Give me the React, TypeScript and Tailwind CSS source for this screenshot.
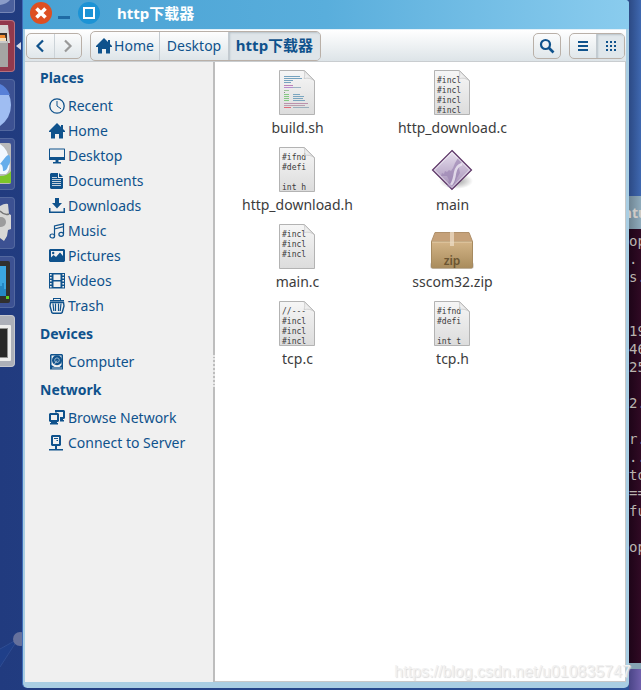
import React from 'react';

/* ---------- Icons (16px symbolic set) ---------- */

const Icon = ({ children }: { children: React.ReactNode }) => (
  <svg width="16" height="16" viewBox="0 0 16 16" fill="currentColor" className="shrink-0" aria-hidden="true">
    {children}
  </svg>
);

const HomeIcon = () => (
  <Icon>
    <path d="M8 0 0 8v1h2v6.5h4V11h4v4.5h4V9h2V8l-2-2V2h-2v2z" />
  </Icon>
);

const ClockIcon = () => (
  <Icon>
    <circle cx="8" cy="8" r="7.2" fill="none" stroke="currentColor" strokeWidth="1.3" />
    <path d="M8 3v5l4 2.8" fill="none" stroke="currentColor" strokeWidth="1" />
  </Icon>
);

const DesktopIcon = () => (
  <Icon>
    <path fillRule="evenodd" d="M0 1 .5.5h15l.5.5v11H0zM1 1.500V9h14V1.500z" />
    <path d="M6.500 12h3v2H12v1.500H4V14h2.500z" />
  </Icon>
);

const DocumentIcon = () => (
  <Icon>
    <path d="M2 0h7v5h5v10l-1 1H2l-1-1V1zM10 0l4 4h-4z" />
    <path d="M3 4.5h5M3 6.5h9M3 8.5h9M3 10.5h9M3 12.5h9" stroke="#f0f0f0" strokeWidth=".8" />
  </Icon>
);

const DownloadIcon = () => (
  <Icon>
    <path d="M6 0h4v5h3l-5 5.500L3 5h3z" />
    <path d="M0 10h1.500v3.500h13V10H16v5H0z" />
  </Icon>
);

const MusicIcon = () => (
  <Icon>
    <path
      d="M5.500 13V3L14.500 .8V11M5.500 6l9-2.300"
      fill="none"
      stroke="currentColor"
      strokeWidth="1.200"
    />
    <ellipse cx="3.300" cy="13" rx="2.300" ry="2" fill="none" stroke="currentColor" strokeWidth="1.200" />
    <ellipse cx="12.200" cy="11.300" rx="2.300" ry="2" fill="none" stroke="currentColor" strokeWidth="1.200" />
  </Icon>
);

const PictureIcon = () => (
  <Icon>
    <path fillRule="evenodd" d="M1 1h14l1 1v11l-1 1H1l-1-1V2zM2 3v9l3-4 2 2 4-5 3 5V3z" />
    <path d="M2 12V9.500L4.500 7 7 9l4-4.500L14 8v4z" />
    <circle cx="4.200" cy="5" r="1.200" />
  </Icon>
);

const VideoIcon = () => (
  <Icon>
    <path fillRule="evenodd" d="M0 0h16v15.500H0zM4.500 1.500v5.500h7V1.500zM4.500 8.500V14h7V8.500z" />
    <path d="M1.800 1v14M14.200 1v14" stroke="#f0f0f0" strokeWidth="1.600" strokeDasharray="1.500 1.500" />
  </Icon>
);

const TrashIcon = () => (
  <Icon>
    <path fillRule="evenodd" d="M4 0h8v2h3v1.500H1V2h3zM5 1v1h6V1z" />
    <path
      d="M1.500 4.500 1 8l1.800 6.500L4 15.300h8l1.200-.8L15 8l-.5-3.500z"
      fill="none"
      stroke="currentColor"
      strokeWidth="1.400"
    />
    <path
      d="M4 5.500 4.800 13M6.500 5.500V13M9.500 5.500V13M12 5.500 11.200 13"
      fill="none"
      stroke="currentColor"
      strokeWidth="1.200"
    />
  </Icon>
);

const DriveIcon = () => (
  <Icon>
    <path fillRule="evenodd" d="M2 0h11l1 1v14.500H1V1zM2.500 1.500v9.500l3 2h5l2-2V1.500z" />
    <circle cx="8" cy="6.200" r="5" />
    <circle cx="8" cy="6.200" r="2.300" fill="none" stroke="#a8bfd2" strokeWidth=".9" />
    <path d="M8 6.500 5.500 10" stroke="#a8bfd2" strokeWidth="1" />
    <path d="M3 14h10" stroke="#f0f0f0" strokeWidth=".7" />
  </Icon>
);

const NetworkIcon = () => (
  <Icon>
    <path fillRule="evenodd" d="M1 3h8l1 1v7l-1 1H8v1h1v1.500H1V13h1v-1H1l-1-1V4zM2 5v5h6V5z" />
    <path d="M6 0h9l1 1v7l-1 1h-1v1h1v1.500h-4V7h3V2H8v.5H6z" />
  </Icon>
);

const ServerIcon = () => (
  <Icon>
    <path fillRule="evenodd" d="M3 0h8l1 1v9l-1 1H8v3h6v1.500H0V14h6v-3H3l-1-1V1zM4 2v7h6V2z" />
    <path d="M5 3.500h4M7.500 5.500H9" stroke="currentColor" strokeWidth="1" />
  </Icon>
);

/* ---------- File artwork ---------- */

const Sheet = ({ children }: { children?: React.ReactNode }) => (
  <svg width="37" height="45" viewBox="0 0 37 45" aria-hidden="true">
    <defs>
      <linearGradient id="sheet" x1="0" y1="0" x2="0" y2="1">
        <stop offset="0" stopColor="#f6f6f6" />
        <stop offset="1" stopColor="#dcdcdc" />
      </linearGradient>
      <linearGradient id="fold" x1="0" y1="1" x2="1" y2="0">
        <stop offset="0" stopColor="#ffffff" />
        <stop offset="1" stopColor="#cccccc" />
      </linearGradient>
    </defs>
    <path d="M.5.5h25l10 10v34H.5z" fill="url(#sheet)" stroke="#b3b3b3" />
    {children}
    <path
      d="M25 .5c1 3 1 6 0 8 4-1 8 0 10.500 2.500z"
      fill="url(#fold)"
      fillOpacity=".7"
      stroke="#c2c2c2"
      strokeWidth=".7"
    />
  </svg>
);

const SourceFile = ({ lines }: { lines: string[] }) => (
  <Sheet>
    {lines.map((line, i) => (
      <text key={i} x="3" y={13 + i * 10} fontSize="8" fill="#3a3a3a" className="font-['DejaVu_Sans_Mono',monospace]">
        {line}
      </text>
    ))}
  </Sheet>
);

// x, y, width, colour of each tiny line in the script preview
const scriptLines: [number, number, number, string][] = [
  [5, 6, 16, '#76a3bf'],
  [5, 8, 18, '#76a3bf'],
  [5, 10, 9, '#76a3bf'],
  [5, 12, 7, '#76a3bf'],
  [5, 15, 9, '#bd83b8'],
  [5, 17, 9, '#b78bd0'],
  [14, 17, 8, '#9db4c4'],
  [5, 20, 5, '#9cc49a'],
  [5, 22, 1, '#888888'],
  [5, 24, 5, '#84c983'],
  [14, 24, 7, '#7ba6c0'],
  [5, 26, 5, '#84c983'],
  [14, 26, 11, '#7ba6c0'],
  [5, 28, 5, '#84c983'],
  [14, 28, 10, '#7ba6c0'],
  [5, 30, 5, '#84c983'],
  [14, 30, 12, '#7ba6c0'],
  [5, 33, 24, '#bb91ac'],
  [5, 35, 21, '#b99fae'],
  [5, 37, 7, '#e06a78'],
  [14, 37, 16, '#9aaebc'],
];

const ScriptFile = () => (
  <Sheet>
    {scriptLines.map(([x, y, w, fill], i) => (
      <rect key={i} x={x} y={y} width={w} height="1" fill={fill} />
    ))}
  </Sheet>
);

const ProgramFile = () => (
  <svg width="45" height="45" viewBox="0 0 45 45" aria-hidden="true">
    <defs>
      <linearGradient id="gem" x1="0" y1="0" x2="0" y2="1">
        <stop offset="0" stopColor="#e8e1ef" />
        <stop offset="1" stopColor="#a18ab4" />
      </linearGradient>
      <radialGradient id="gemShadow">
        <stop offset="0" stopColor="#000000" stopOpacity=".4" />
        <stop offset="1" stopColor="#000000" stopOpacity="0" />
      </radialGradient>
    </defs>
    <ellipse cx="26" cy="34" rx="17" ry="8" fill="url(#gemShadow)" />
    <path d="M22 3.500 41.500 23 22 42.500 2.500 23z" fill="url(#gem)" stroke="#5c3566" strokeWidth="1.200" />
    <path d="m11 29 1-3 2 1 1-3 2 1 2-2 2 1 2-3 2-5 3-5 4 4-3 6 1 5-3 5-3 6-4 4-3-2 2-6-2-4z" fill="#9a82b0" fillOpacity=".65" />
    <path d="M32 17q-6 2-7 9-1 8-4 12" fill="none" stroke="#f3eff7" strokeOpacity=".75" strokeWidth="2.500" />
    <path d="M22 5.500 39.500 23 22 40.500 4.500 23z" fill="none" stroke="#ffffff" strokeOpacity=".6" />
  </svg>
);

const ZipFile = () => (
  <svg width="45" height="45" viewBox="0 0 45 45" aria-hidden="true">
    <defs>
      <linearGradient id="box" x1="0" y1="0" x2="0" y2="1">
        <stop offset="0" stopColor="#d3b487" />
        <stop offset="1" stopColor="#a98c5d" />
      </linearGradient>
    </defs>
    <rect x="0" y="38" width="44" height="7" rx="3" fill="#000000" fillOpacity=".15" />
    <path d="M5 8.500h34l3.500 9H1.500z" fill="#c5a179" stroke="#b0906a" />
    <path d="M1.500 17.500h41V43a1 1 0 0 1-1 1h-39a1 1 0 0 1-1-1z" fill="url(#box)" stroke="#a68a60" />
    <path d="M2 18h40" stroke="#e5cfad" />
    <path d="M20 8h4v14h-4z" fill="#ecdcc6" fillOpacity=".75" />
    <text x="22" y="41" textAnchor="middle" fontSize="12" fontWeight="600" fill="#6b5532" className="font-['Noto_Sans',sans-serif]">
      zip
    </text>
  </svg>
);

/* ---------- Data ---------- */

const places = [
  {
    title: 'Places',
    items: [
      { label: 'Recent', icon: <ClockIcon /> },
      { label: 'Home', icon: <HomeIcon /> },
      { label: 'Desktop', icon: <DesktopIcon /> },
      { label: 'Documents', icon: <DocumentIcon /> },
      { label: 'Downloads', icon: <DownloadIcon /> },
      { label: 'Music', icon: <MusicIcon /> },
      { label: 'Pictures', icon: <PictureIcon /> },
      { label: 'Videos', icon: <VideoIcon /> },
      { label: 'Trash', icon: <TrashIcon /> },
    ],
  },
  {
    title: 'Devices',
    items: [{ label: 'Computer', icon: <DriveIcon /> }],
  },
  {
    title: 'Network',
    items: [
      { label: 'Browse Network', icon: <NetworkIcon /> },
      { label: 'Connect to Server', icon: <ServerIcon /> },
    ],
  },
];

const files = [
  { name: 'build.sh', art: <ScriptFile /> },
  { name: 'http_download.c', art: <SourceFile lines={['#incl', '#incl', '#incl', '#incl']} /> },
  { name: 'http_download.h', art: <SourceFile lines={['#ifnd', '#defi', '', 'int h']} /> },
  { name: 'main', art: <ProgramFile /> },
  { name: 'main.c', art: <SourceFile lines={['#incl', '#incl', '#incl']} /> },
  { name: 'sscom32.zip', art: <ZipFile /> },
  { name: 'tcp.c', art: <SourceFile lines={['//---', '#incl', '#incl', '#incl']} /> },
  { name: 'tcp.h', art: <SourceFile lines={['#ifnd', '#defi', '', 'int t']} /> },
];

const terminalOutput = ['op', '.', 's.', '', '', '19', '46', '25', '', '2.', '', 'r.', '..', 'to', '==', 'fu', '', 'op'];

/* ---------- Launcher ---------- */

const Tile = ({ className, children }: { className: string; children?: React.ReactNode }) => (
  <div className={`h-[52px] w-[15px] shrink-0 overflow-hidden rounded-r border-y border-r ${className}`}>
    <svg width="14" height="50" viewBox="0 0 14 50" aria-hidden="true">
      {children}
    </svg>
  </div>
);

const Launcher = () => (
  <div className="flex w-[22px] shrink-0 flex-col gap-[7px] overflow-hidden">
    <div className="h-[13px] w-[15px] shrink-0 rounded-br border-r border-b border-[#7585b5] bg-[#4a5f9c]">
      <svg width="14" height="12" viewBox="0 0 14 12" aria-hidden="true">
        <path d="M0 0h10Q7 4 0 5z" fill="#8b9cc8" />
      </svg>
    </div>
    <div className="flex shrink-0 items-center">
      <Tile className="border-[#b5707e] bg-[#92394c]">
        <path d="M0 4h8l2 18H0z" fill="#d5d5d3" />
        <path d="M0 12h7v9H0z" fill="#38312b" />
        <path d="M0 14h5l1 7H0z" fill="#f08a2c" />
        <path d="M0 17h6v4H0z" fill="#f6dfb8" />
        <path d="M0 20h8v26H0z" fill="#a5a5a3" />
        <path d="M0 21h7.500" stroke="#eeeeee" />
      </Tile>
      <svg width="7" height="10" viewBox="0 0 7 10" aria-hidden="true">
        <path d="M6 1v8L1 5z" fill="#d5d9e6" />
      </svg>
    </div>
    <Tile className="border-[#53689f] bg-[#3c5192]">
      <path d="M0 5q11 7 11 20T0 46z" fill="#9fbdf2" />
      <path d="M0 4q7 3 10 11H0z" fill="#5780d8" />
    </Tile>
    <Tile className="border-[#53689f] bg-[#3c5192]">
      <rect x="-4" y="4" width="15" height="41" rx="2" fill="#b9b9b9" />
      <path d="M0 5q8 5 9 16 2 10-3 14H0z" fill="#f2f8ff" />
      <path d="M4 20q5-7 6-2 1 6-2 9-1 5-5 5 0-7-3-7z" fill="#66adeb" />
      <path d="M0 37q8 0 11-5v12H0z" fill="#7dc52a" />
    </Tile>
    <Tile className="border-[#53689f] bg-[#3c5192]">
      <path d="M0 8q5-3 8-2l1 10 2 1v14l-3 1-1 6-3 5-4-3z" fill="#d8d8d6" />
      <path d="M0 13q5 5 9 3" fill="none" stroke="#767676" strokeWidth="1.500" />
      <circle cx="1" cy="24" r="5" fill="#9c9c9c" />
    </Tile>
    <Tile className="border-[#53689f] bg-[#3c5192]">
      <rect x="-4" y="4" width="14" height="42" rx="2" fill="#31302e" />
      <rect x="-4" y="9" width="10" height="30" fill="#3ba7e2" />
      <path d="M0 29h2v-3h2v6h2v7H0z" fill="#2587c4" />
      <rect x="6" y="39" width="3" height="3" fill="#5fd01c" />
    </Tile>
    <Tile className="border-[#c5c7ce] bg-[#adb0b8]">
      <rect x="-4" y="9" width="15" height="36" rx="1" fill="#eeeeec" />
      <rect x="-4" y="12" width="12" height="30" fill="#91918f" />
      <rect x="-4" y="13" width="11" height="28" fill="#292927" />
    </Tile>
    {/* node of the wallpaper's network pattern */}
    <svg width="22" height="65" viewBox="0 0 22 65" className="mt-auto" aria-hidden="true">
      <path d="M0 24 18 14 0 42" fill="#1f3f89" stroke="#2f4d92" />
      <circle cx="20" cy="14" r="7" fill="#66719c" />
    </svg>
  </div>
);

/* ---------- Window ---------- */

const TitleBar = () => (
  <header className="flex h-[29px] shrink-0 items-center bg-gradient-to-r from-[#48a1d3] via-[#59aedc] to-[#8accee] pb-1 pl-[7px] text-white">
    <button aria-label="Close" className="flex size-[22px] items-center justify-center rounded-full bg-[#dd4f22]">
      <svg width="14" height="14" viewBox="0 0 14 14" aria-hidden="true">
        <path d="m2.500 2.500 9 9M11.500 2.500l-9 9" stroke="white" strokeWidth="3.600" />
      </svg>
    </button>
    <button aria-label="Minimize" className="ml-[6px] flex h-[22px] w-3 items-end pb-[5px]">
      <span className="h-[3px] w-full bg-[#1f6ba5]" />
    </button>
    <button aria-label="Maximize" className="ml-2 flex size-[22px] items-center justify-center rounded-full bg-[#1c93d5]">
      <span className="size-3 border-2 border-white" />
    </button>
    <h1 className="ml-[17px] pt-px text-[15px] leading-5 font-bold">http下载器</h1>
  </header>
);

const Toolbar = () => (
  <div className="flex h-[33px] shrink-0 items-center justify-between border-t border-b border-t-[#e3f1f9] border-b-[#c9cdd0] bg-gradient-to-b from-white to-[#dde4e8] px-px">
    <div className="flex items-center gap-2">
      <div className="flex h-[26px] w-14 divide-x divide-[#ccd3d8] rounded-[5px] border border-[#b9b0a8]">
        <button aria-label="Back" className="flex flex-1 items-center justify-center">
          <svg width="10" height="14" viewBox="0 0 10 14" aria-hidden="true">
            <path d="M8 1.500 2.500 7 8 12.500" fill="none" stroke="#0f528c" strokeWidth="2.200" />
          </svg>
        </button>
        <button aria-label="Forward" className="flex flex-1 items-center justify-center">
          <svg width="10" height="14" viewBox="0 0 10 14" aria-hidden="true">
            <path d="M2 1.500 7.500 7 2 12.500" fill="none" stroke="#999999" strokeWidth="2.200" />
          </svg>
        </button>
      </div>
      <nav
        aria-label="Path"
        className="flex h-[30px] divide-x divide-[#c3cad0] rounded-[5px] border border-[#b9b0a8] text-[14px] text-[#0f528c]"
      >
        <button className="flex w-[69px] items-center justify-center gap-[2px]">
          <HomeIcon />
          Home
        </button>
        <button className="flex w-[69px] items-center justify-center">Desktop</button>
        <button className="flex w-[91px] items-center justify-center rounded-r bg-[#dfe5e9] text-[15px] font-bold shadow-[inset_1px_1px_2px_#b8c2c9]">
          http下载器
        </button>
      </nav>
    </div>
    <div className="flex items-center gap-2">
      <button
        aria-label="Search"
        className="flex h-[26px] w-7 items-center justify-center rounded-[5px] border border-[#b9b0a8] text-[#0f528c]"
      >
        <svg width="16" height="16" viewBox="0 0 16 16" fill="none" stroke="currentColor" aria-hidden="true">
          <circle cx="6.500" cy="6.500" r="4.500" strokeWidth="2.200" />
          <path d="m10 10 4.500 4.500" strokeWidth="2.600" />
        </svg>
      </button>
      <div className="flex h-[26px] w-14 divide-x divide-[#c3cad0] rounded-[5px] border border-[#b9b0a8] text-[#0f528c]">
        <button aria-label="List view" className="flex flex-1 items-center justify-center">
          <svg width="10" height="10" viewBox="0 0 10 10" fill="currentColor" aria-hidden="true">
            <path d="M0 0h10v2H0zM0 4h10v2H0zM0 8h10v2H0z" />
          </svg>
        </button>
        <button
          aria-label="Grid view"
          className="flex flex-1 items-center justify-center rounded-r bg-[#e0e7eb] pt-px pl-px shadow-[inset_1px_1px_2px_#b8c2c9]"
        >
          <svg width="10" height="10" viewBox="0 0 10 10" fill="currentColor" aria-hidden="true">
            <path d="M0 0h2v2H0zM4 0h2v2H4zM8 0h2v2H8zM0 4h2v2H0zM4 4h2v2H4zM8 4h2v2H8zM0 8h2v2H0zM4 8h2v2H4zM8 8h2v2H8z" />
          </svg>
        </button>
      </div>
    </div>
  </div>
);

const Sidebar = () => (
  <aside className="w-[188px] shrink-0 bg-[#f0f0f0] text-[14px] text-[#0f528c]">
    {places.map((section) => (
      <section key={section.title}>
        <h2 className="h-[31px] pl-[15px] leading-[31px] font-bold">{section.title}</h2>
        <ul>
          {section.items.map((item) => (
            <li key={item.label}>
              <a href="#" className="flex h-[25px] items-center gap-[3px] pl-6">
                {item.icon}
                {item.label}
              </a>
            </li>
          ))}
        </ul>
      </section>
    ))}
  </aside>
);

const FileGrid = () => (
  <main className="min-w-0 flex-1 border-r border-b border-[#c8c8c8] bg-white pt-2 pl-[5px]">
    <div className="grid grid-cols-[155px_155px] gap-y-[9px]">
      {files.map((file) => (
        <button key={file.name} className="flex flex-col items-center gap-[3px] text-[14px] leading-5 text-[#3c3c3c]">
          {file.art}
          {file.name}
        </button>
      ))}
    </div>
  </main>
);

const Terminal = () => (
  <div className="flex w-3 shrink-0 flex-col overflow-hidden bg-gradient-to-r from-[#2c4a85] to-[#3f68b0]">
    <div className="h-[196px] shrink-0" />
    <div className="flex h-[33px] shrink-0 items-center justify-center bg-gradient-to-r from-[#6f8593] to-[#8fabbc] text-[14px] font-bold text-[#cfcbc7]">
      ntu
    </div>
    <pre className="flex-1 overflow-hidden bg-gradient-to-r from-[#1e0518] to-[#300a24] pt-[3px] font-['DejaVu_Sans_Mono',monospace] text-[14px] leading-[18px] text-[#b9b3ae]">
      {terminalOutput.join('\n')}
    </pre>
    <div className="h-[6px] shrink-0 bg-[#86a5b3]" />
    <div className="h-[21px] shrink-0 bg-gradient-to-r from-[#4a4587] to-[#7060ac]" />
  </div>
);

export default function App() {
  return (
    <div className="relative flex min-h-screen overflow-hidden bg-gradient-to-r from-[#213b7f] to-[#2c5399] font-['Noto_Sans','Noto_Sans_CJK_SC',sans-serif]">
      <Launcher />
      <div className="mb-[2px] flex min-w-0 flex-1 flex-col overflow-hidden rounded-b-[5px] rounded-tr-[4px] border-l border-[#3e6db8] bg-[#a9cee3]">
        <TitleBar />
        <div className="flex flex-1 flex-col pr-[3px] pb-[6px] pl-[2px]">
          <Toolbar />
          <div className="flex flex-1">
            <Sidebar />
            <div className="flex w-[2px] shrink-0 flex-col bg-[#bdbdbd] pt-[293px]">
              <div className="h-8 border-l-2 border-dotted border-[#e6e6e6]" />
            </div>
            <FileGrid />
          </div>
        </div>
      </div>
      <Terminal />
      <p className="pointer-events-none absolute right-[10px] bottom-2 font-['Liberation_Sans',sans-serif] text-[16px] leading-5 text-[#f1f1f1] [text-shadow:1px_1px_1px_#dcdcdc]">
        https://blog.csdn.net/u010835747
      </p>
    </div>
  );
}
